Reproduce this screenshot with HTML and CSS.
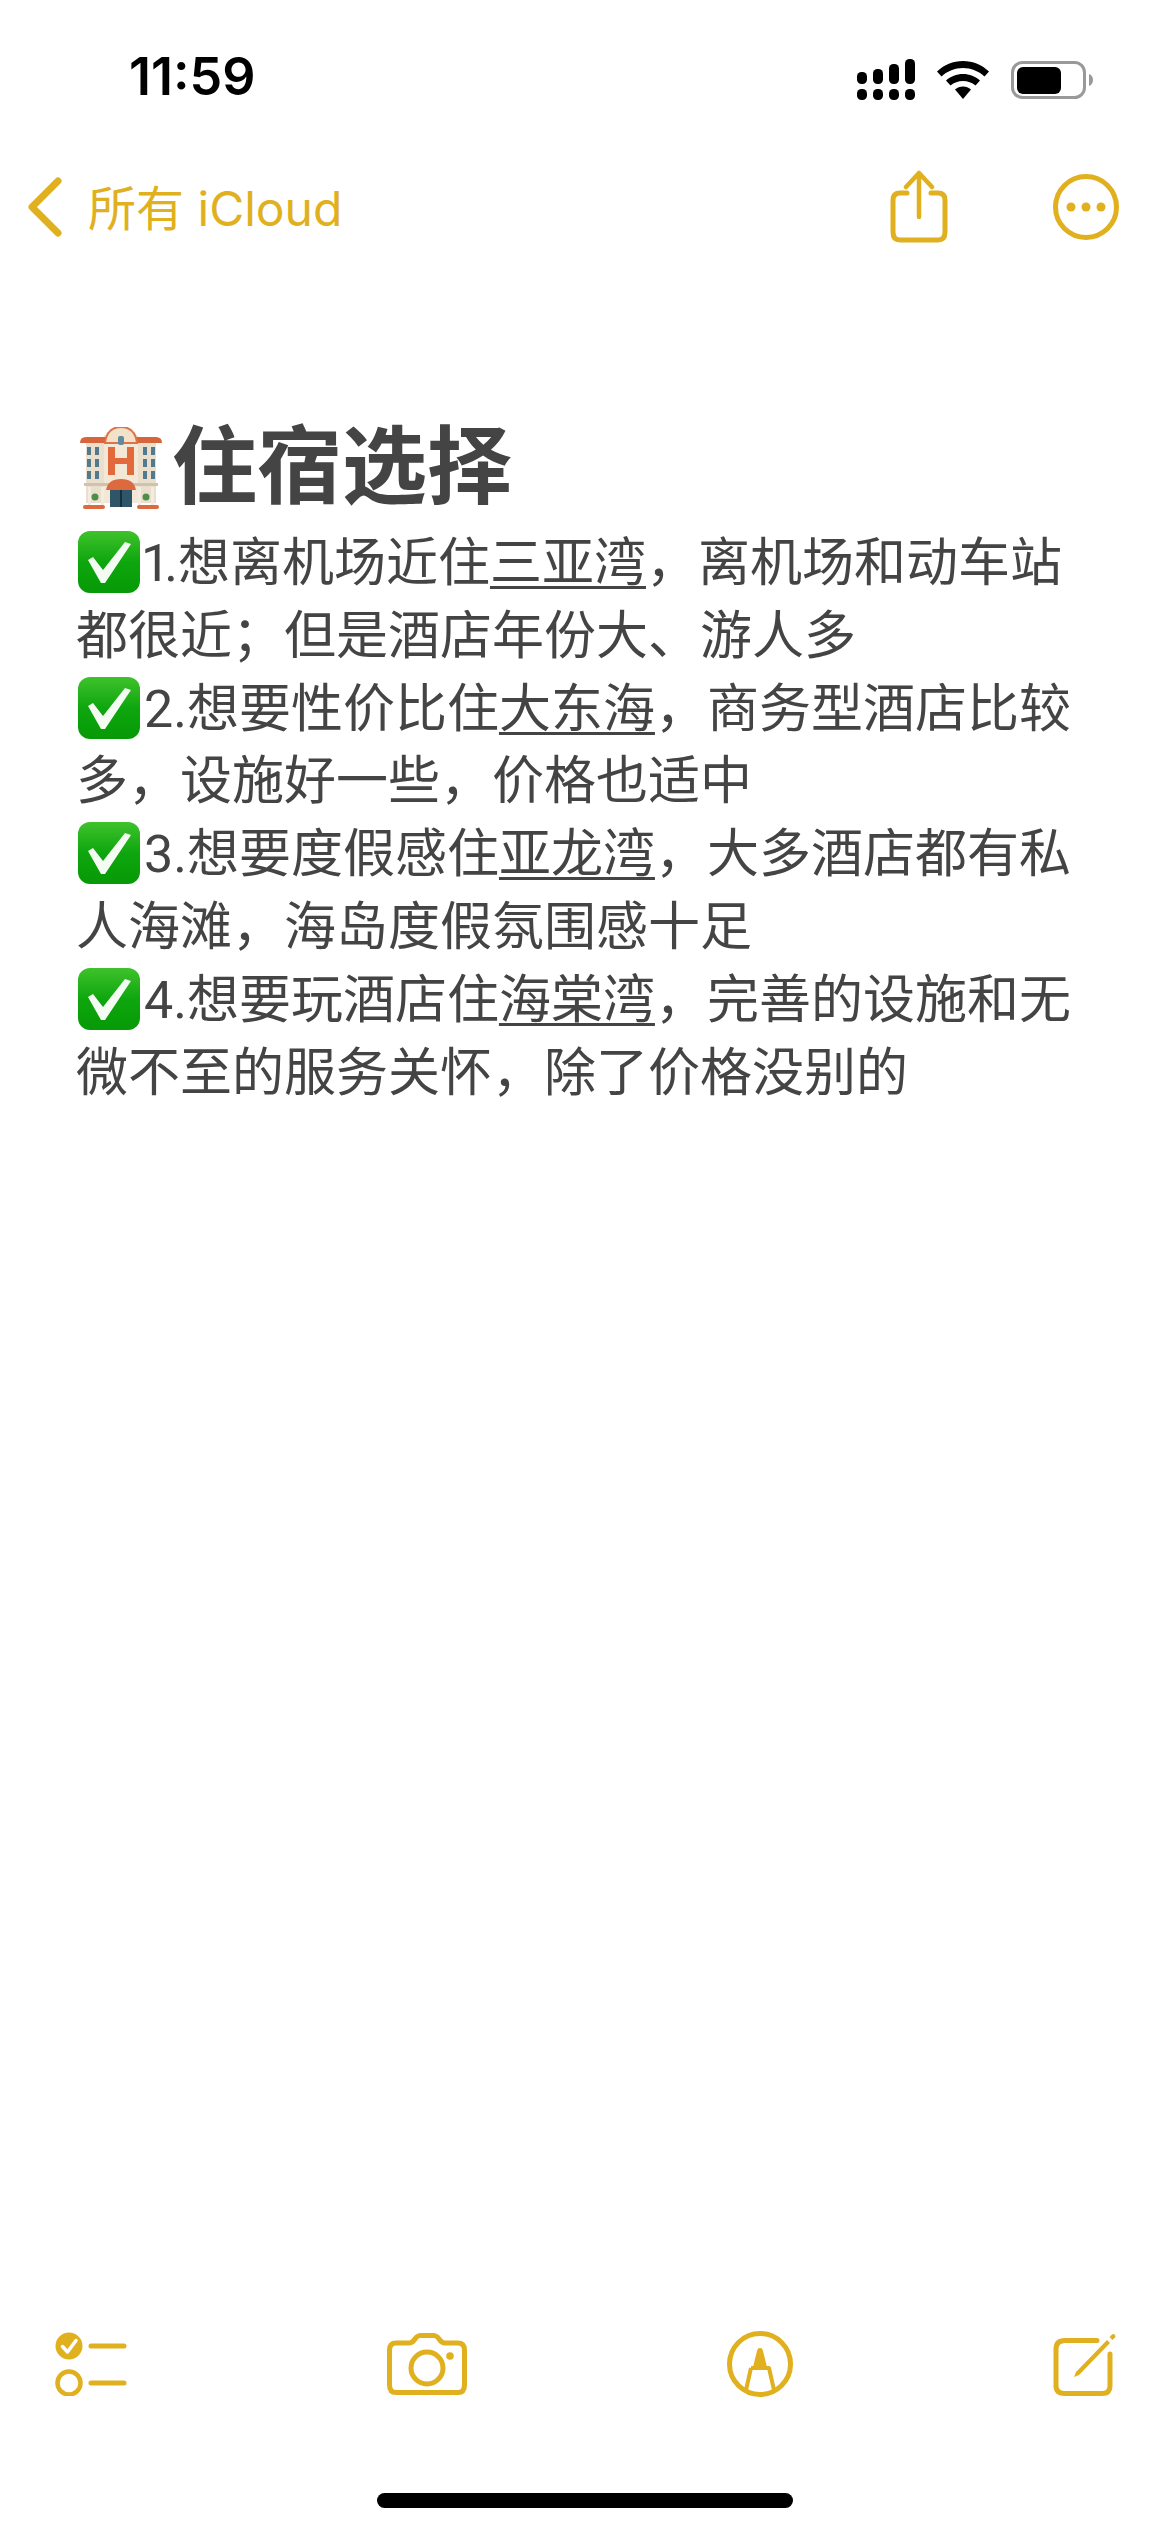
FILE: index.html
```html
<!DOCTYPE html>
<html lang="zh-CN">
<head>
    <title>备忘录 - 住宿选择</title>
    <link rel="stylesheet" href="styles.css">
</head>
<body>
    <svg class="defs" width="0" height="0" aria-hidden="true">
        <defs>
            <linearGradient id="greenBox" x1="0" y1="0" x2="0" y2="1">
                <stop offset="0" stop-color="#3fc22c"/>
                <stop offset="0.5" stop-color="#0ea60e"/>
                <stop offset="1" stop-color="#069a06"/>
            </linearGradient>
            <symbol id="checkBox" viewBox="0 0 62 62">
                <rect x="0" y="0" width="62" height="62" rx="12" fill="url(#greenBox)"/>
                <path d="M10 29 L15 26 L25 39 L47 11 L53 13 L27 52 L23 52 Z" fill="#f4fbf2"/>
            </symbol>
        </defs>
    </svg>

    <div class="phone">
        <header class="status-bar">
            <span class="time">11:59</span>
            <div class="status-icons">
                <svg class="signal" width="58" height="41" viewBox="0 0 58 41">
                    <rect x="0" y="13" width="10" height="12" rx="4.5"/>
                    <rect x="16" y="10" width="10" height="15" rx="4.5"/>
                    <rect x="32" y="5" width="10" height="20" rx="4.5"/>
                    <rect x="48" y="0" width="10" height="25" rx="4.5"/>
                    <rect x="0" y="30" width="10" height="11" rx="4.5"/>
                    <rect x="16" y="30" width="10" height="11" rx="4.5"/>
                    <rect x="32" y="30" width="10" height="11" rx="4.5"/>
                    <rect x="48" y="30" width="10" height="11" rx="4.5"/>
                </svg>
                <svg class="wifi" width="52" height="38" viewBox="0 0 52 38">
                    <path d="M26 0 C36 0 45 4 52 10.500 L47.500 15.500 C41.500 10 34 7 26 7 C18 7 10.500 10 4.500 15.500 L0 10.500 C7 4 16 0 26 0 Z"/>
                    <path d="M26 13 C32.500 13 38.500 15.500 43 19.500 L38.500 24.500 C35 21.500 30.700 20 26 20 C21.300 20 17 21.500 13.500 24.500 L9 19.500 C13.500 15.500 19.500 13 26 13 Z"/>
                    <path d="M26 25.500 C29 25.500 31.700 26.500 34 28.500 L26 38 L18 28.500 C20.300 26.500 23 25.500 26 25.500 Z"/>
                </svg>
                <svg class="battery" width="83" height="38" viewBox="0 0 83 38">
                    <rect x="1.500" y="1.500" width="72" height="35" rx="10" fill="none" stroke="#999" stroke-width="3"/>
                    <rect x="6" y="6" width="44" height="27" rx="6"/>
                    <path d="M78 13 C81 14 82 16.500 82 19 C82 21.500 81 24 78 25 Z" fill="#999"/>
                </svg>
            </div>
        </header>

        <nav class="nav-bar">
            <div class="back">
                <svg class="chevron" width="36" height="60" viewBox="0 0 36 60">
                    <path d="M31 4 L5 30 L31 56" fill="none" stroke="#e0b01e" stroke-width="7" stroke-linecap="round" stroke-linejoin="round"/>
                </svg>
                <span class="back-label">所有 iCloud</span>
            </div>
            <div class="nav-actions">
                <svg width="60" height="74" viewBox="0 0 60 74">
                    <path d="M18 23 H11 Q4 23 4 30 V62 Q4 70 11 70 H49 Q56 70 56 62 V30 Q56 23 49 23 H42" fill="none" stroke="#e0b01e" stroke-width="5" stroke-linecap="round"/>
                    <path d="M30 47 V4 M17 17 L30 3 L43 17" fill="none" stroke="#e0b01e" stroke-width="4.500" stroke-linecap="round" stroke-linejoin="round"/>
                </svg>
                <svg width="66" height="66" viewBox="0 0 66 66">
                    <circle cx="33" cy="33" r="30.500" fill="none" stroke="#e0b01e" stroke-width="5"/>
                    <circle cx="18" cy="33" r="4.500" fill="#e0b01e"/>
                    <circle cx="33" cy="33" r="4.500" fill="#e0b01e"/>
                    <circle cx="48" cy="33" r="4.500" fill="#e0b01e"/>
                </svg>
            </div>
        </nav>

        <main class="note">
            <h1 class="note-title">
                <svg class="hotel" width="82" height="82" viewBox="0 0 82 82">
                    <rect x="6" y="14" width="70" height="62" fill="#eadfcd"/>
                    <rect x="24" y="8" width="34" height="68" fill="#f3e8d6"/>
                    <path d="M0 16 Q0 10 6 10 H26 V16 Z" fill="#d8643a"/>
                    <path d="M82 16 Q82 10 76 10 H56 V16 Z" fill="#d8643a"/>
                    <path d="M25 16 Q27 0 41 0 Q55 0 57 16 Z" fill="#f1e2c9" stroke="#df7347" stroke-width="2"/>
                    <rect x="38" y="9" width="6" height="9" rx="2" fill="#5f8aa0"/>
                    <path d="M28 20 H35 V31 H47 V20 H54 V48 H47 V37 H35 V48 H28 Z" fill="#e2693b"/>
                    <g fill="#54798c">
                        <rect x="7" y="20" width="4" height="8"/>
                        <rect x="15" y="20" width="4" height="8"/>
                        <rect x="7" y="32" width="4" height="8"/>
                        <rect x="15" y="32" width="4" height="8"/>
                        <rect x="7" y="44" width="4" height="8"/>
                        <rect x="15" y="44" width="4" height="8"/>
                        <rect x="63" y="20" width="4" height="8"/>
                        <rect x="71" y="20" width="4" height="8"/>
                        <rect x="63" y="32" width="4" height="8"/>
                        <rect x="71" y="32" width="4" height="8"/>
                        <rect x="63" y="44" width="4" height="8"/>
                        <rect x="71" y="44" width="4" height="8"/>
                    </g>
                    <rect x="4" y="56" width="74" height="3" fill="#cfc3b0"/>
                    <rect x="30" y="62" width="22" height="18" fill="#2f5568"/>
                    <rect x="40" y="62" width="2" height="18" fill="#14303c"/>
                    <path d="M26 63 Q28 52 41 52 Q54 52 56 63 Z" fill="#dc6a3e"/>
                    <rect x="8" y="60" width="3" height="18" fill="#f4ece0"/>
                    <rect x="21" y="60" width="3" height="18" fill="#f4ece0"/>
                    <rect x="58" y="60" width="3" height="18" fill="#f4ece0"/>
                    <rect x="71" y="60" width="3" height="18" fill="#f4ece0"/>
                    <circle cx="15" cy="70" r="3.500" fill="#4d8f4a"/>
                    <circle cx="66" cy="70" r="3.500" fill="#4d8f4a"/>
                    <rect x="3" y="78" width="22" height="4" rx="2" fill="#dc6a3e"/>
                    <rect x="57" y="78" width="22" height="4" rx="2" fill="#dc6a3e"/>
                </svg><span class="title-text">住宿选择</span>
            </h1>
            <p class="note-body">
                <svg class="check"><use href="#checkBox"/></svg><span class="digit-one">1</span>.想离机场近住<u>三亚湾</u>，离机场和动车站<br>
                都很近；但是酒店年份大、游人多<br>
                <svg class="check"><use href="#checkBox"/></svg>2.想要性价比住<u>大东海</u>，商务型酒店比较<br>
                多，设施好一些，价格也适中<br>
                <svg class="check"><use href="#checkBox"/></svg>3.想要度假感住<u>亚龙湾</u>，大多酒店都有私<br>
                人海滩，海岛度假氛围感十足<br>
                <svg class="check"><use href="#checkBox"/></svg>4.想要玩酒店住<u>海棠湾</u>，完善的设施和无<br>
                微不至的服务关怀，除了价格没别的
            </p>
        </main>

        <footer class="toolbar">
            <svg width="72" height="64" viewBox="0 0 72 64">
                <circle cx="14" cy="14" r="13.500" fill="#e0b01e"/>
                <path d="M7.500 14.500 L12.500 20 L21 8.500" fill="none" stroke="#fff" stroke-width="3.500" stroke-linecap="round" stroke-linejoin="round"/>
                <circle cx="14" cy="51" r="11.500" fill="none" stroke="#e0b01e" stroke-width="4.500"/>
                <path d="M36 14 H69 M36 51 H69" stroke="#e0b01e" stroke-width="5" stroke-linecap="round"/>
            </svg>
            <svg width="80" height="62" viewBox="0 0 80 62">
                <path d="M9 10 H22 C25 10 26 9 28 6 C30 3 31 2.500 34 2.500 H46 C49 2.500 50 3 52 6 C54 9 55 10 58 10 H71 Q77.500 10 77.500 17 V52 Q77.500 59.500 71 59.500 H9 Q2.500 59.500 2.500 52 V17 Q2.500 10 9 10 Z" fill="none" stroke="#e0b01e" stroke-width="5" stroke-linejoin="round"/>
                <circle cx="40" cy="35" r="16" fill="none" stroke="#e0b01e" stroke-width="5"/>
                <circle cx="63" cy="23" r="3.800" fill="#e0b01e"/>
            </svg>
            <svg width="66" height="66" viewBox="0 0 66 66">
                <circle cx="33" cy="33" r="30.500" fill="none" stroke="#e0b01e" stroke-width="5"/>
                <path d="M33 17 C35 17 35.500 18 36 20 L40 36 H26 L30 20 C30.500 18 31 17 33 17 Z" fill="#e0b01e"/>
                <path d="M24 37 H42 L47 59 M24 37 L19 59" fill="none" stroke="#e0b01e" stroke-width="4" stroke-linejoin="round"/>
            </svg>
            <svg width="66" height="66" viewBox="0 0 66 66">
                <path d="M44 9.500 H12 Q3 9.500 3 18 V55 Q3 62.500 12 62.500 H49 Q57 62.500 57 55 V23" fill="none" stroke="#e0b01e" stroke-width="5" stroke-linecap="round"/>
                <path d="M23 41 L54 9 L57 12 L26 44 L21 46 Z" fill="#e0b01e"/>
                <path d="M56.500 6 L59 3.500 Q60.500 2.500 62 4 Q63 5.500 62 6.500 L59.500 9 Z" fill="#e0b01e"/>
            </svg>
        </footer>

        <div class="home-indicator"></div>
    </div>
</body>
</html>
```

FILE: styles.css
```css
* {
    box-sizing: border-box;
}
body {
    margin: 0;
    background: #fff;
    font-family: Roboto, "Noto Sans CJK SC", sans-serif;
    color: #444;
}
.defs {
    display: block;
    height: 0;
}
.phone {
    width: 1170px;
    height: 2532px;
    display: flex;
    flex-direction: column;
    overflow: hidden;
}

/* status bar */
.status-bar {
    height: 152px;
    padding: 52px 76px 0 129px;
    display: flex;
    justify-content: space-between;
    align-items: flex-start;
}
.time {
    font-family: Inter, sans-serif;
    font-size: 52px;
    font-weight: 600;
    line-height: 50px;
    color: #000;
}
.status-icons {
    display: flex;
    align-items: center;
    gap: 22px;
    margin-top: 7px;
}

/* nav */
.nav-bar {
    height: 110px;
    padding: 0 51px 0 27px;
    display: flex;
    justify-content: space-between;
    align-items: center;
}
.back {
    display: flex;
    align-items: center;
    gap: 25px;
}
.back-label {
    margin-top: -5px;
    font-family: Inter, "Noto Sans CJK SC", sans-serif;
    font-size: 48px;
    color: #e0b01e;
}
.nav-actions {
    display: flex;
    align-items: center;
    gap: 104px;
}

/* note */
.note {
    padding: 155px 70px 0 76px;
}
.note-title {
    margin: 0 0 9px;
    display: flex;
    align-items: center;
    gap: 10px;
    height: 102px;
    padding-left: 4px;
    font-size: 85px;
    font-weight: 700;
    line-height: 102px;
}
.note-body {
    margin: 0;
    font-size: 52px;
    line-height: 72.8px;
    white-space: nowrap;
}
.note-body u {
    text-underline-offset: 5px;
    text-decoration-thickness: 3px;
}
.check {
    width: 62px;
    height: 62px;
    margin: 0 4px 0 2px;
    vertical-align: -12px;
}
/* the 1 is narrow in the original font */
.digit-one {
    margin-left: -3px;
    letter-spacing: -6px;
}

/* bottom toolbar */
.toolbar {
    margin-top: auto;
    padding: 0 51px 0 55px;
    display: flex;
    justify-content: space-between;
    align-items: center;
}
.home-indicator {
    width: 416px;
    height: 15px;
    margin: 96px auto 24px;
    border-radius: 8px;
    background: #000;
}
```
